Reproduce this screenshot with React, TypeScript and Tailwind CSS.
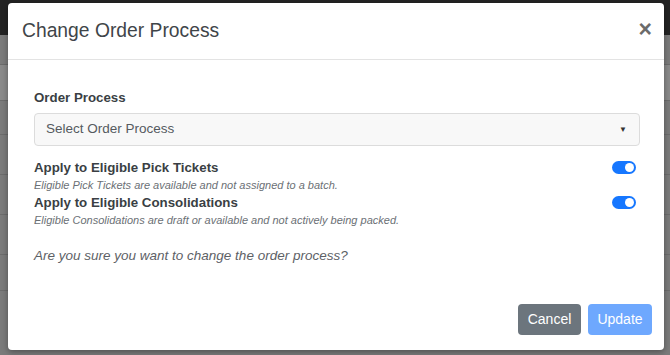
import React, { useState } from 'react';

const font = { fontFamily: '"Liberation Sans", Arial, sans-serif' };

const Toggle = ({ on, onChange }: { on: boolean; onChange: () => void }) => (
  <button
    type="button"
    onClick={onChange}
    className={`relative block h-[13px] w-[24px] shrink-0 rounded-full ${on ? 'bg-[#1677ff]' : 'bg-gray-300'}`}
  >
    <span
      className={`absolute top-[2px] h-[9px] w-[9px] rounded-full bg-white ${on ? 'left-[13px]' : 'left-[2px]'}`}
    />
  </button>
);

const App = () => {
  const [pickTickets, setPickTickets] = useState(true);
  const [consolidations, setConsolidations] = useState(true);

  return (
    <div className="relative h-[355px] w-[670px] overflow-hidden bg-[#7b7b7b]" style={font}>
      {/* page behind the backdrop */}
      <div className="h-[35px] bg-[#232323]" />
      <div className="flex flex-col">
        <div className="h-[30px] border-b border-[#6c6c6c]" />
        <div className="h-[36px] border-b border-[#6c6c6c] bg-[#8a8a8a]" />
        <div className="h-[34px] border-b border-[#6c6c6c]" />
        <div className="h-[40px] border-b border-[#6c6c6c]" />
        <div className="h-[40px] border-b border-[#6c6c6c]" />
        <div className="h-[40px] border-b border-[#6c6c6c]" />
        <div className="h-[36px] border-b border-[#6c6c6c]" />
      </div>

      {/* modal */}
      <div className="absolute left-[8px] top-[3px] flex h-[347px] w-[656px] flex-col rounded-[4px] bg-white shadow-[0_2px_6px_rgba(0,0,0,0.35)]">
        <div className="flex h-[57px] items-center justify-between border-b border-[#e3e3e3] pl-[14px] pr-[12px]">
          <h5 className="text-[19.3px] leading-none text-[#3f4549]">Change Order Process</h5>
          <button type="button" className="pb-[4px] text-[23px] font-bold leading-none text-[#6b6b6b]">
            ×
          </button>
        </div>

        <div className="flex flex-1 flex-col px-[26px] pt-[29px]">
          <label className="text-[13.3px] font-bold leading-[17px] text-[#3a3f44]">Order Process</label>
          <div className="mr-[-2px] mt-[7px] flex h-[33px] items-center justify-between rounded-[4px] border border-[#dcdcdc] bg-[#f8f8f8] pl-[11px] pr-[12px]">
            <span className="text-[13.5px] text-[#555a5f]">Select Order Process</span>
            <span className="text-[8px] text-[#333]">▼</span>
          </div>

          <div className="mt-[13px] flex items-start justify-between pr-[2px]">
            <div className="flex flex-col">
              <span className="text-[13.3px] font-bold leading-[17px] text-[#3a3f44]">
                Apply to Eligible Pick Tickets
              </span>
              <span className="mt-[3px] text-[11px] italic leading-[13px] text-[#6b7075]">
                Eligible Pick Tickets are available and not assigned to a batch.
              </span>
            </div>
            <div className="flex pt-[2px]">
              <Toggle on={pickTickets} onChange={() => setPickTickets(!pickTickets)} />
            </div>
          </div>

          <div className="mt-[2px] flex items-start justify-between pr-[2px]">
            <div className="flex flex-col">
              <span className="text-[13.3px] font-bold leading-[17px] text-[#3a3f44]">
                Apply to Eligible Consolidations
              </span>
              <span className="mt-[3px] text-[11px] italic leading-[13px] text-[#6b7075]">
                Eligible Consolidations are draft or available and not actively being packed.
              </span>
            </div>
            <div className="flex pt-[2px]">
              <Toggle on={consolidations} onChange={() => setConsolidations(!consolidations)} />
            </div>
          </div>

          <p className="mt-[20px] text-[13.5px] italic leading-[17px] text-[#5d6166]">
            Are you sure you want to change the order process?
          </p>
        </div>

        <div className="flex justify-end gap-[7px] pb-[15px] pr-[12px]">
          <button type="button" className="h-[31px] w-[63px] rounded-[4px] bg-[#6c757d] text-[14px] text-white">
            Cancel
          </button>
          <button type="button" className="h-[31px] w-[64px] rounded-[4px] bg-[#6ea8fe] text-[14px] text-white">
            Update
          </button>
        </div>
      </div>
    </div>
  );
};

export default App;
